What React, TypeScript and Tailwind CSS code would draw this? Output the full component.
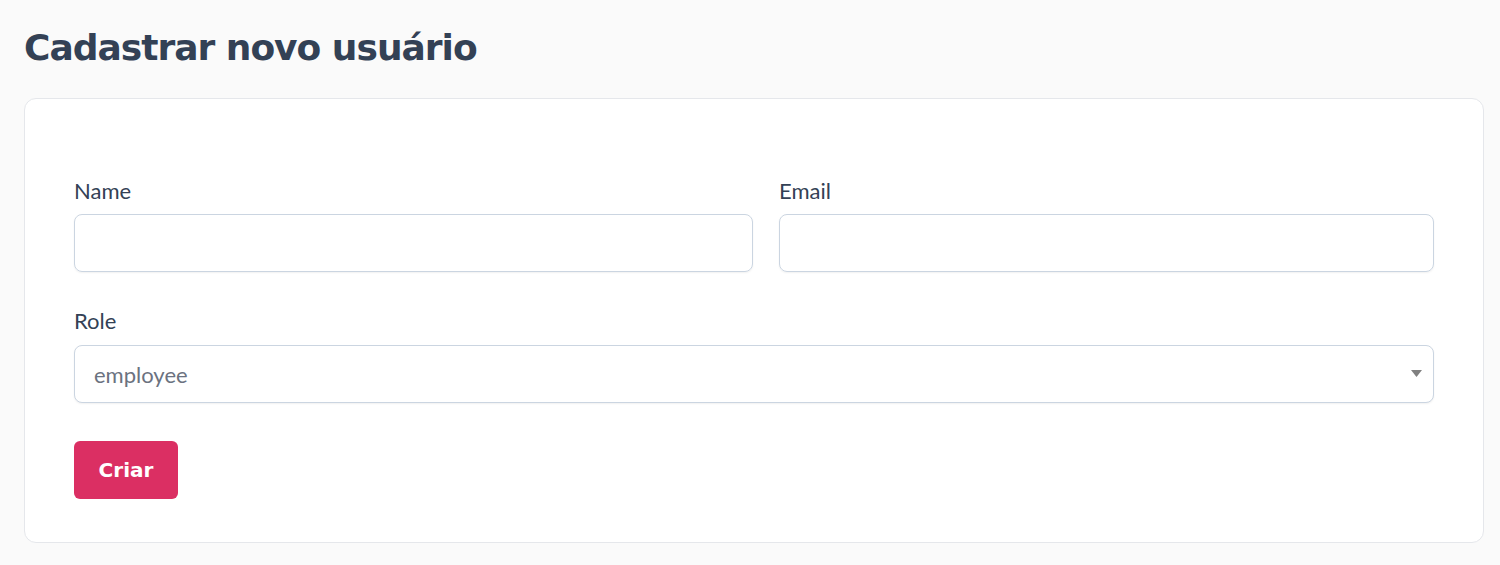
export default function App() {
  return (
    <div className="min-h-screen bg-[#fafafa] pl-6 pr-4 pt-[28px] pb-6 font-['Lato',sans-serif]">
      <h1 className="text-[36px] leading-[40px] font-bold text-[#334155] mb-[30px] font-['DejaVu_Sans',sans-serif] tracking-[-1px]">
        Cadastrar novo usuário
      </h1>

      <div className="bg-white border border-[#e5e7eb] rounded-xl px-[49px] pt-[77px] pb-[43px]">
        <form className="flex flex-col" onSubmit={(e) => e.preventDefault()}>
          <div className="grid grid-cols-[679px_1fr] gap-x-[26px]">
            <div className="flex flex-col">
              <label className="text-[22px] leading-[30px] text-[#334155] mb-2">Name</label>
              <input
                type="text"
                className="h-[58px] rounded-lg border border-[#cbd5e1] shadow-[0_1px_2px_rgba(0,0,0,0.06)] px-5 text-[21px] outline-none"
              />
            </div>
            <div className="flex flex-col">
              <label className="text-[22px] leading-[30px] text-[#334155] mb-2">Email</label>
              <input
                type="email"
                className="h-[58px] rounded-lg border border-[#cbd5e1] shadow-[0_1px_2px_rgba(0,0,0,0.06)] px-5 text-[21px] outline-none"
              />
            </div>
          </div>

          <div className="flex flex-col mt-[34px]">
            <label className="text-[22px] leading-[30px] text-[#334155] mb-[9px]">Role</label>
            <div className="relative">
              <select
                defaultValue="employee"
                className="w-full h-[58px] appearance-none rounded-lg border border-[#cbd5e1] shadow-[0_1px_2px_rgba(0,0,0,0.06)] bg-white pl-[19px] pr-10 text-[22px] text-[#6b7280] outline-none"
              >
                <option value="employee">employee</option>
                <option value="admin">admin</option>
              </select>
              <svg
                className="pointer-events-none absolute right-[12px] top-[25px]"
                width="11"
                height="7"
                viewBox="0 0 11 7"
              >
                <path d="M0 0 H11 L5.5 7 Z" fill="#808080" />
              </svg>
            </div>
          </div>

          <div className="mt-[38px]">
            <button
              type="submit"
              className="h-[58px] w-[104px] rounded-md bg-[#db2f63] text-white text-[20px] font-bold font-['DejaVu_Sans',sans-serif]"
            >
              Criar
            </button>
          </div>
        </form>
      </div>
    </div>
  );
}
